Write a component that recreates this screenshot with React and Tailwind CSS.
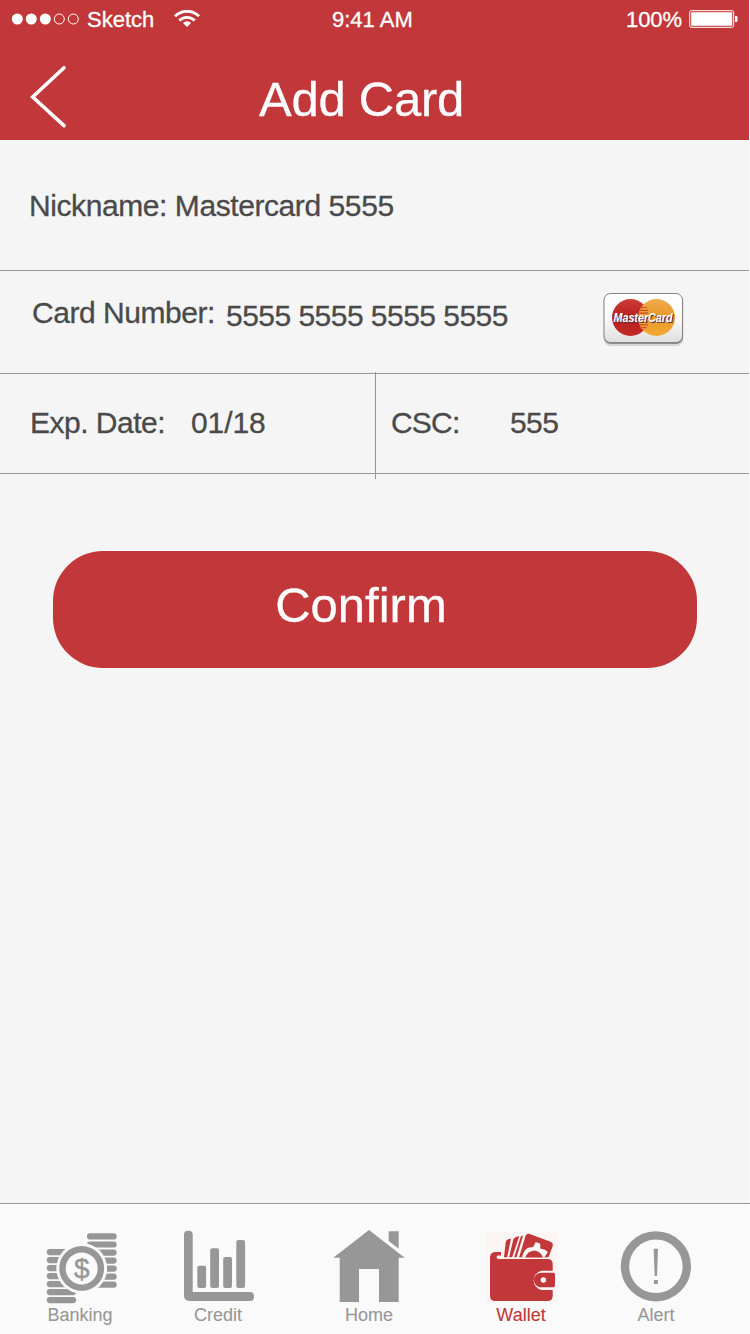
import { useState } from 'react'

function BankingIcon() {
  return (
    <svg className="block h-20 w-20" viewBox="0 0 80 80" fill="currentColor">
      {[26, 34, 42, 50, 58, 66, 74].map(y => (
        <rect key={y} x="6.7" y={y - 3} width="29.5" height="6.2" rx="3.1" />
      ))}
      {[10.4, 18.5, 26.6, 34.6, 42.7, 50.7, 58.7].map(y => (
        <rect key={y} x="47" y={y - 3.1} width="29.7" height="6.2" rx="3.1" />
      ))}
      <circle cx="41.7" cy="42.4" r="25.4" fill="#fafafa" />
      <circle cx="41.7" cy="42.4" r="19.2" fill="none" stroke="currentColor" strokeWidth="6.4" />
      <text x="41.7" y="51.8" textAnchor="middle" fontSize="28" stroke="currentColor" strokeWidth="0.4">$</text>
    </svg>
  )
}

function CreditIcon() {
  return (
    <svg className="block h-20 w-20" viewBox="0 0 80 80" fill="currentColor">
      <path d="M6 8.700a4 4 0 0 1 4-4h.7a4 4 0 0 1 4 4V66H72a4 4 0 0 1 4 4v1a4 4 0 0 1-4 4H11a5 5 0 0 1-5-5z" />
      <rect x="19.3" y="39.7" width="8.8" height="22.3" rx="2" />
      <rect x="32.2" y="22.3" width="8.8" height="39.7" rx="2" />
      <rect x="45.2" y="31" width="8.8" height="31" rx="2" />
      <rect x="58.3" y="14" width="8.8" height="48" rx="2" />
    </svg>
  )
}

function HomeIcon() {
  return (
    <svg className="block h-20 w-20" viewBox="0 0 80 80" fill="currentColor">
      <path d="M40 4 75.7 31.7h-6V76H50V43H30v33H10.7V31.7h-6.4z" />
      <path d="M59.7 5.3h10v17.4l-10-7.6z" />
    </svg>
  )
}

function WalletIcon() {
  return (
    <svg className="block h-20 w-20" viewBox="0 0 80 80" fill="currentColor">
      <rect x="5" y="6" width="72" height="71" fill="#fbf5f4" />
      <path d="M9 32c0-4 2-6 6-6h5v3.400h-3.200c-1.700.5-1.700 3 .2 3.500h49.700c3.2 0 5 1.800 5 5V70c0 3.200-2 5-5 5H14c-3.200 0-5-2-5-5z" />
      <path d="M30 12.700c-3.600.2-4.900 1.300-5.300 3.800L23 31.200h3.200z" />
      <path d="M38.200 10.300c-4 .7-5.600 1.700-6.200 4.400L28.100 31.200h3.100z" />
      <path d="M40 10.100c1.400-.5 2-.3 1.700.8L35.600 31.200h-2.400z" />
      <path d="M44.300 10.400c.8-2.200 2.200-3 4.400-2.300l20.200 7.400c2.600 1 3.400 2.600 2.700 4.900L67.500 31.200H38.100z" />
      <path
        d="M40.900 31.400c1.200-4.600 3-8 6.200-9.600l5-.9 2.700-4.800 4.400 1.600.1 4.800 4.600 1.300 3 2.300-3.700 5.300z"
        fill="#fbf5f4"
      />
      <path d="M44.200 31.400c2-4.600 5.100-6.700 9-6.700s7 2.300 8.800 6.700z" />
      <path d="M74.500 44.800H60.500a9.800 9.800 0 0 0 0 19.200h14z" fill="#fbf5f4" />
      <path d="M60.500 46.700H72c1.500 0 2 .6 2 2v10.600c0 1.400-.6 2-2 2H60.500c-4.500 0-7.500-3.200-7.500-7.300s3-7.300 7.500-7.300z" />
      <circle cx="62.400" cy="54" r="2.700" fill="#fff" />
    </svg>
  )
}

function AlertIcon() {
  return (
    <svg className="block h-20 w-20" viewBox="0 0 80 80" fill="currentColor">
      <circle cx="39.900" cy="40.300" r="30.900" fill="none" stroke="currentColor" strokeWidth="8.400" />
      <path d="M37.700 22.700H42L41 50h-2.300z" />
      <rect x="37.900" y="54" width="4" height="3.900" />
    </svg>
  )
}

function MastercardLogo() {
  return (
    <svg className="block h-[58px] w-[88px]" viewBox="0 0 88 58">
      <defs>
        <linearGradient id="card" x1="0" y1="0" x2="0" y2="1">
          <stop offset="0" stopColor="#fff" />
          <stop offset="0.5" stopColor="#fafafa" />
          <stop offset="1" stopColor="#dedede" />
        </linearGradient>
        <linearGradient id="red" x1="0" y1="0" x2="0" y2="1">
          <stop offset="0" stopColor="#d03c36" />
          <stop offset="0.5" stopColor="#b51f20" />
          <stop offset="1" stopColor="#c52a26" />
        </linearGradient>
        <linearGradient id="gold" x1="0" y1="0" x2="0" y2="1">
          <stop offset="0" stopColor="#f0ab48" />
          <stop offset="0.5" stopColor="#e8982b" />
          <stop offset="1" stopColor="#f5a935" />
        </linearGradient>
      </defs>
      <rect x="3.500" y="5" width="80" height="51" rx="7" fill="#000" opacity="0.12" />
      <rect x="4" y="4.500" width="79" height="49.500" rx="6.500" fill="#8f8f8f" />
      <rect x="4" y="3.500" width="78.500" height="49" rx="6.500" fill="url(#card)" stroke="#858585" />
      <circle cx="30.500" cy="27.500" r="18.500" fill="url(#red)" />
      <circle cx="56.500" cy="27.500" r="18.500" fill="url(#gold)" />
      <path
        d="M40 17.500h7M39 20.300h9M38 23.100h10M38 32h10M39 34.800h9M40 37.600h7"
        stroke="#d0502c"
        strokeWidth="1.200"
      />
      <text
        x="14.500"
        y="32.700"
        fontSize="13"
        fontWeight="bold"
        fontStyle="italic"
        fill="#5a2b45"
        textLength="59"
        lengthAdjust="spacingAndGlyphs"
        aria-hidden="true"
      >
        MasterCard
      </text>
      <text
        x="13.500"
        y="31.800"
        fontSize="13"
        fontWeight="bold"
        fontStyle="italic"
        fill="#fff"
        textLength="59"
        lengthAdjust="spacingAndGlyphs"
      >
        MasterCard
      </text>
    </svg>
  )
}

function StatusBar() {
  return (
    <div className="flex h-[39px] items-center text-[22px] leading-[22px]">
      <svg className="ml-[11px] h-3 w-[70px] -translate-y-px" viewBox="0 0 70 12" fill="#fff">
        <circle cx="6.300" cy="6" r="5.500" />
        <circle cx="20.300" cy="6" r="5.500" />
        <circle cx="34.300" cy="6" r="5.500" />
        <circle cx="48.300" cy="6" r="5" fill="none" stroke="#fff" />
        <circle cx="62.300" cy="6" r="5" fill="none" stroke="#fff" />
      </svg>
      <span className="ml-1.5 w-[86px]">Sketch</span>
      <svg className="h-[18px] w-7 -translate-y-px" viewBox="0 0 28 18" fill="none" stroke="#fff" strokeWidth="2.900">
        <path d="M2 6.300a17 17 0 0 1 24 0" />
        <path d="M6.300 10.500a11 11 0 0 1 15.400 0" />
        <path d="M14 17l-4-4a5.700 5.700 0 0 1 8 0z" fill="#fff" stroke="none" />
      </svg>
      <span className="ml-[131px] w-[293px]">9:41 AM</span>
      <span className="w-16 pl-px tracking-[-0.1px]">100%</span>
      <svg className="h-[18px] w-[49px] -translate-y-px" viewBox="0 0 49 18">
        <rect x="0.700" y="0.700" width="44" height="16.600" rx="1.500" fill="none" stroke="#fff" />
        <rect x="2.200" y="2.200" width="41" height="13.600" rx="0.500" fill="#fff" />
        <path d="M46 6h1.500q1 0 1 1v4q0 1-1 1H46z" fill="#fff" />
      </svg>
    </div>
  )
}

const tabs = [
  { name: 'Banking', icon: BankingIcon, width: 'w-40' },
  { name: 'Credit', icon: CreditIcon, width: 'w-[116px]' },
  { name: 'Home', icon: HomeIcon, width: 'w-[186px]' },
  { name: 'Wallet', icon: WalletIcon, width: 'w-[118px]' },
  { name: 'Alert', icon: AlertIcon, width: 'w-[152px]' },
]

export default function App() {
  const [active, setActive] = useState('Wallet')

  return (
    <div className="h-[1334px] w-[750px] overflow-hidden bg-[#fcfcfc] font-['Liberation_Sans',Arial,sans-serif] [-webkit-text-stroke:0.3px]">
      <div className="flex h-full flex-col">
        <header className="h-[140px] w-[749px] bg-[#c23739] text-white">
          <StatusBar />
          <div className="flex h-[101px] items-start">
            <button className="mt-[25px] ml-7" type="button" aria-label="Back">
              <svg className="block h-[66px] w-10" viewBox="0 0 40 66" fill="none" stroke="#fff">
                <path d="M36 3.700 4.700 33 36 61.700" strokeWidth="3.600" strokeLinecap="round" />
              </svg>
            </button>
            <h1 className="mt-[35px] ml-[191px] text-[49px] leading-[50px] tracking-[-0.25px]">Add Card</h1>
          </div>
        </header>

        <main className="w-[749px] flex-1 bg-[#f5f5f5] text-[30px] leading-[30px] whitespace-nowrap text-[#4a4a4a]">
          <div className="flex h-[131px] items-center border-b border-[#979797] pt-px pl-[29px] tracking-[-0.42px]">
            Nickname: Mastercard 5555
          </div>
          <div className="flex h-[103px] items-start border-b border-[#979797] pl-8">
            <span className="mt-[27px] w-[194px] tracking-[-0.45px]">Card Number:</span>
            <span className="mt-[30px] w-[374px] tracking-[-0.53px]">5555 5555 5555 5555</span>
            <div className="mt-[19px]">
              <MastercardLogo />
            </div>
          </div>
          <div className="relative flex h-[100px] items-center border-b border-[#979797] pb-px">
            <span className="w-[191px] pl-[30px] tracking-[-0.5px]">Exp. Date:</span>
            <span className="w-[200px] tracking-[-0.1px]">01/18</span>
            <span className="w-[119px] tracking-[-0.8px]">CSC:</span>
            <span className="tracking-[-0.6px]">555</span>
            <div className="absolute -top-0.5 left-[375px] h-[107px] w-px bg-[#979797]" />
          </div>
          <button
            className="mt-[77px] ml-[53px] block h-[117px] w-[644px] rounded-[50px] bg-[#c23739] pr-[28px] pb-[9px] text-center text-[49px] leading-[50px] text-white"
            type="button"
          >
            Confirm
          </button>
        </main>

        <nav className="flex h-[131px] border-t border-[#979797] bg-[#fafafa] pt-[22px] [-webkit-text-stroke:0.1px]">
          {tabs.map(({ name, icon: Icon, width }) => (
            <button
              key={name}
              className={`${width} flex flex-col items-center ${active === name ? 'text-[#c23739]' : 'text-[#979797]'}`}
              onClick={() => setActive(name)}
              type="button"
            >
              <Icon />
              <span className="text-[18px] leading-[18px]">{name}</span>
            </button>
          ))}
        </nav>
      </div>
    </div>
  )
}
